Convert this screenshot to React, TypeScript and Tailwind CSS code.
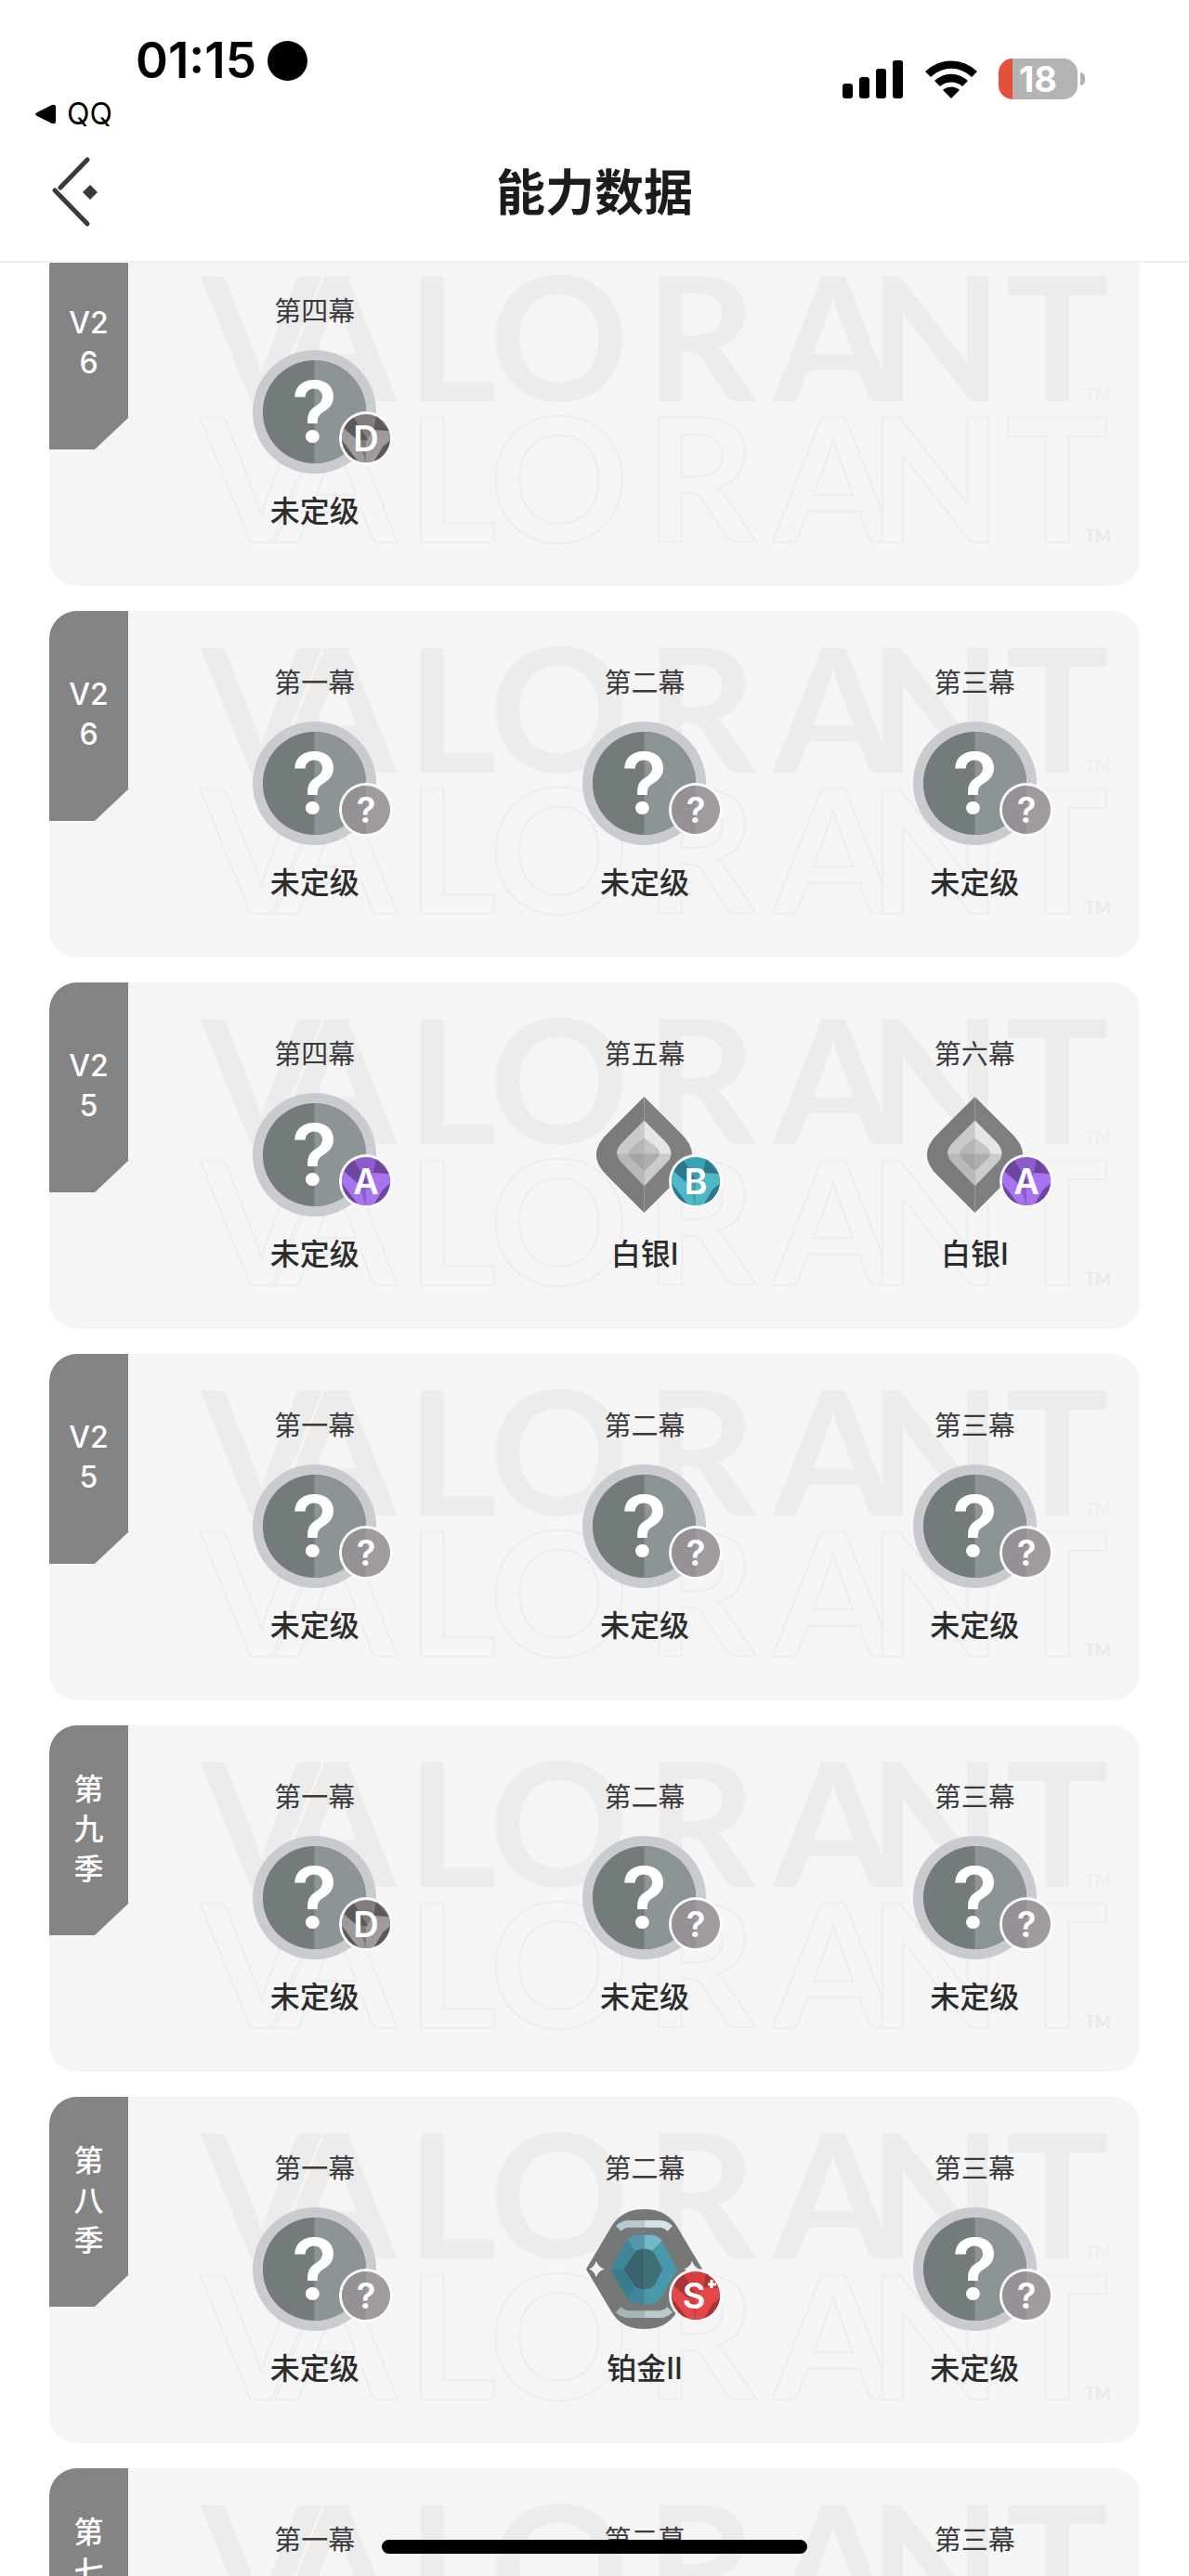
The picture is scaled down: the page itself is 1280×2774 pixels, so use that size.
import { useId } from "react";
import clsx from "clsx";

type Tier = "unranked" | "silver" | "platinum";
type Grade = "A" | "B" | "D" | "S+" | "?";

interface Act {
    name: string;
    rank: string;
    tier: Tier;
    grade: Grade;
}

interface Season {
    id: string;
    label: string;
    acts: Act[];
}

const unranked = (name: string, grade: Grade = "?"): Act => ({
    name,
    rank: "未定级",
    tier: "unranked",
    grade,
});

const SEASONS: Season[] = [
    { id: "v26-2", label: "V26", acts: [unranked("第四幕", "D")] },
    { id: "v26-1", label: "V26", acts: [unranked("第一幕"), unranked("第二幕"), unranked("第三幕")] },
    {
        id: "v25-2",
        label: "V25",
        acts: [
            unranked("第四幕", "A"),
            { name: "第五幕", rank: "白银I", tier: "silver", grade: "B" },
            { name: "第六幕", rank: "白银I", tier: "silver", grade: "A" },
        ],
    },
    { id: "v25-1", label: "V25", acts: [unranked("第一幕"), unranked("第二幕"), unranked("第三幕")] },
    { id: "s9", label: "第九季", acts: [unranked("第一幕", "D"), unranked("第二幕"), unranked("第三幕")] },
    {
        id: "s8",
        label: "第八季",
        acts: [
            unranked("第一幕"),
            { name: "第二幕", rank: "铂金II", tier: "platinum", grade: "S+" },
            unranked("第三幕"),
        ],
    },
    { id: "s7", label: "第七季", acts: [unranked("第一幕"), unranked("第二幕"), unranked("第三幕")] },
];

// base / light / dark facets of each grade badge
const GRADE_COLORS: Record<Grade, [string, string, string]> = {
    A: ["#8f5cd0", "#a873ee", "#6d46a0"],
    B: ["#38a3b4", "#4cb8c8", "#2c7888"],
    D: ["#827c7e", "#a09a9c", "#5d585a"],
    "S+": ["#d83c40", "#e5484b", "#a83436"],
    "?": ["#a09b9e", "#a09b9e", "#a09b9e"],
};

function GradeBadge({ grade }: { grade: Grade }) {
    const clip = useId();
    const [base, light, dark] = GRADE_COLORS[grade];
    return (
        <svg viewBox="0 0 58 58" className="absolute left-[94px] top-[67px] size-[58px]">
            <clipPath id={clip}>
                <circle cx="29" cy="29" r="26" />
            </clipPath>
            <circle cx="29" cy="29" r="29" fill="#fafafa" />
            <g clipPath={`url(#${clip})`}>
                <rect width="58" height="58" fill={base} />
                {grade === "?" ? (
                    <rect width="29" height="58" fill="#969195" />
                ) : (
                    <>
                        <path d="M0 14 L21 32 L29 56 H22 L0 28Z" fill={light} />
                        <path d="M38 19 L58 21 V28 L36 56 H29 V32Z" fill={light} />
                        <path d="M4 17 L15 5 L31 31 L20 31Z" fill={dark} />
                        <path d="M40 4 L54 21 L37 20Z" fill={dark} />
                        <path d="M0 27 L25 60 H0Z" fill={dark} />
                        <path d="M58 29 L47 38 L34 60 H58Z" fill={dark} />
                    </>
                )}
            </g>
            <text
                x={grade === "S+" ? 27 : 29}
                y="43"
                textAnchor="middle"
                fill="#ffffff"
                fontSize="38"
                className="font-['Inter',sans-serif] font-semibold"
            >
                {grade[0]}
            </text>
            {grade === "S+" && <path d="M46 12v9M42 17h9" stroke="#ffffff" strokeWidth="3" />}
        </svg>
    );
}

function UnrankedIcon() {
    return (
        <svg viewBox="0 0 136 136" className="size-full">
            <circle cx="68" cy="68" r="67" fill="#c9cbd0" />
            <circle cx="68" cy="68" r="56" fill="#737b7b" />
            <path d="M68 12a56 56 0 0 1 0 112z" fill="#8d9495" />
            <text
                x="68"
                y="101"
                textAnchor="middle"
                fill="#ffffff"
                fontSize="92"
                className="font-['Inter',sans-serif] font-semibold"
            >
                ?
            </text>
        </svg>
    );
}

function SilverIcon() {
    return (
        <svg viewBox="0 0 136 136" className="size-full">
            <path d="M68 5 L28 45 Q4 68 28 91 L68 131Z" fill="#7b7b7b" />
            <path d="M68 5 L108 45 Q132 68 108 91 L68 131Z" fill="#7f7f7f" />
            <path d="M68 31 L45 54 Q33 67 44 77 L68 102Z" fill="#b9b9b9" />
            <path d="M68 31 L45 54 Q38 61 38 67 H68Z" fill="#cacaca" />
            <path d="M68 31 L91 54 Q103 67 92 77 L68 102Z" fill="#cbcbcb" />
            <path d="M68 31 L91 54 Q97 61 97 67 H68Z" fill="#e6e6e6" />
            <path d="M68 50 L55 60 Q49 67 54 72 L68 86Z" fill="#a5a5a5" />
            <path d="M68 50 L81 60 Q87 67 82 72 L68 86Z" fill="#adadad" />
            <path d="M68 50 L55 60 Q51 64 51 67 H68Z" fill="#b6b6b6" />
            <path d="M68 50 L81 60 Q85 64 85 67 H68Z" fill="#c4c4c4" />
        </svg>
    );
}

function PlatinumIcon() {
    return (
        <svg viewBox="0 0 136 136" className="size-full">
            <path d="M5 68 L33 21 Q44 3 68 3 Q92 3 103 21 L131 68 L103 115 Q92 133 68 133 Q44 133 33 115Z" fill="#767877" />
            <g fill="none" strokeWidth="8">
                <path d="M40 24 Q45 19 51 19 H68" stroke="#b9c9d2" />
                <path d="M68 19 H85 Q91 19 96 24" stroke="#d5e2ea" />
                <path d="M40 112 Q45 117 51 117 H68" stroke="#a3b5b5" />
                <path d="M68 117 H85 Q91 117 96 112" stroke="#b9cccb" />
            </g>
            <path d="M60 31 Q54 31 50 36 L31 68 L50 100 Q54 105 60 106 H68 V31Z" fill="#40859a" />
            <path d="M76 31 Q82 31 86 36 L104 68 L86 100 Q82 105 76 106 H68 V31Z" fill="#4899ab" />
            <path d="M31 68 H47 L57 90 L50 100Z" fill="#397c90" />
            <path d="M68 31 H76 Q82 31 87 37 L77 48 L68 46Z" fill="#74b7c8" />
            <path d="M50 36 Q54 31 60 31 H68 V46 L58 48Z" fill="#5596a8" />
            <path d="M68 46 Q60 46 57 51 L46 68 L57 86 Q61 90 68 90Z" fill="#3a626c" />
            <path d="M68 46 Q76 46 79 51 L88 68 L79 86 Q75 90 68 90Z" fill="#416f76" />
            <path d="M16 59 Q18 66 25 68 Q18 70 16 77 Q14 70 8 68 Q14 66 16 59Z" fill="#f2f2f2" />
            <path d="M120 59 Q122 66 128 68 Q122 70 120 77 Q118 70 111 68 Q118 66 120 59Z" fill="#f2f2f2" />
        </svg>
    );
}

const TIER_ICONS = {
    unranked: UnrankedIcon,
    silver: SilverIcon,
    platinum: PlatinumIcon,
};

// each letter of the wordmark with its centre on the card
const WORDMARK: [string, number][] = [
    ["V", 228],
    ["A", 309],
    ["L", 433],
    ["O", 549],
    ["R", 701],
    ["A", 844],
    ["N", 954],
    ["T", 1085],
];

/** Faint wordmark printed twice behind every season card. */
function Watermark() {
    return (
        <svg
            viewBox="0 0 1174 373"
            aria-hidden="true"
            className="absolute inset-0 size-full font-['Lato',sans-serif] font-bold"
        >
            <g fill="#ececec" fontSize="186" textAnchor="middle">
                {WORDMARK.map(([letter, x]) => (
                    <text key={x} x={x} y="174">
                        {letter}
                    </text>
                ))}
            </g>
            <g fill="#f5f5f5" stroke="#ededed" strokeWidth="2" fontSize="186" textAnchor="middle">
                {WORDMARK.map(([letter, x]) => (
                    <text key={x} x={x} y="326">
                        {letter}
                    </text>
                ))}
            </g>
            <g fill="#e9e9e9" fontSize="18">
                <text x="1115" y="174" fill="#efefef">
                    TM
                </text>
                <text x="1115" y="326">
                    TM
                </text>
            </g>
        </svg>
    );
}

function ActCell({ act }: { act: Act }) {
    const Icon = TIER_ICONS[act.tier];
    return (
        <li className="flex flex-col items-center gap-5">
            <span className="text-[29px] leading-10 text-[#3a3a3c]">{act.name}</span>
            <div className="relative size-[135px]">
                <Icon />
                <GradeBadge grade={act.grade} />
            </div>
            <span className="text-[32px] leading-10 font-medium text-[#2c2c2e]">{act.rank}</span>
        </li>
    );
}

function SeasonCard({ season }: { season: Season }) {
    return (
        <section className="relative flex shrink-0 items-start overflow-hidden rounded-[30px] bg-[#f5f5f5]">
            <Watermark />
            <h2 className="relative flex h-[226px] w-[85px] shrink-0 items-center justify-center bg-[#848484] pb-1 text-[32px] leading-[43px] font-medium text-white [clip-path:polygon(0_0,100%_0,100%_192px,49px_100%,0_100%)]">
                <span className="w-12 text-center break-all">{season.label}</span>
            </h2>
            <ul className="relative ml-[23px] grid flex-1 grid-cols-3 pt-[58px] pb-[60px]">
                {season.acts.map((act) => (
                    <ActCell key={act.name} act={act} />
                ))}
            </ul>
        </section>
    );
}

function StatusBar() {
    return (
        <div className="flex h-[142px] justify-between pr-[112px] pl-9 text-black">
            <div className="flex flex-col pt-9">
                <div className="flex items-center gap-3 pl-[110px]">
                    <time className="text-[53px] leading-[58px] font-semibold">01:15</time>
                    <span className="size-[43px] rounded-full bg-black" />
                </div>
                <a href="#qq" className="flex items-center gap-3 text-[32px] leading-[58px]">
                    <svg viewBox="0 0 24 22" className="h-[22px] w-6">
                        <path d="M4 9 L20 1 Q24 0 24 3 V19 Q24 22 20 21 L4 13 Q0 11 4 9Z" fill="#000000" />
                    </svg>
                    QQ
                </a>
            </div>
            <div className="flex items-center self-start pt-[63px]">
                <svg viewBox="0 0 66 42" className="mr-[22px] h-[42px] w-[66px]">
                    <rect x="0" y="26" width="11" height="16" rx="3" />
                    <rect x="18" y="19" width="11" height="23" rx="3" />
                    <rect x="36" y="10" width="11" height="32" rx="3" />
                    <rect x="54" y="1" width="11" height="41" rx="3" />
                </svg>
                <svg viewBox="0 0 58 42" className="mr-[22px] h-[42px] w-[58px]">
                    <path d="M1 13 A40 40 0 0 1 57 13 L51 19 A31 31 0 0 0 7 19Z" />
                    <path d="M11 23 A26 26 0 0 1 47 23 L41 29 A18 18 0 0 0 17 29Z" />
                    <path d="M20 33 A13 13 0 0 1 38 33 L29 42Z" />
                </svg>
                <div className="flex h-[44px] w-[85px] items-center justify-center overflow-hidden rounded-[15px] bg-[linear-gradient(to_right,#e5503c_15px,#b3b3b3_15px)] text-[38px] leading-none font-bold text-white">
                    18
                </div>
                <span className="ml-[3px] h-[14px] w-[5px] rounded-r-full bg-[#b3b3b3]" />
            </div>
        </div>
    );
}

function TitleBar() {
    return (
        <header className="grid h-[141px] shrink-0 grid-cols-[1fr_auto_1fr] items-center border-b-2 border-[#f0f0f0] pb-2">
            <button type="button" aria-label="返回" className="ml-[54px] w-[54px]">
                <svg viewBox="0 0 54 78" className="h-[78px] w-[54px]">
                    <g stroke="#3a3a3a" strokeWidth="5" strokeLinecap="round">
                        <path d="M40 3 L11 33" />
                        <path d="M5 36 L40 72" />
                    </g>
                    <path d="M43 30 L51 38 L43 46 L35 38Z" fill="#3a3a3a" />
                </svg>
            </button>
            <h1 className="text-[53px] leading-[60px] font-bold text-[#1c1c1e]">能力数据</h1>
        </header>
    );
}

export default function App() {
    return (
        <div
            lang="zh-CN"
            className={clsx(
                "relative flex h-screen flex-col overflow-hidden bg-white",
                "font-['Inter','Noto_Sans_CJK_SC',sans-serif]"
            )}
        >
            <StatusBar />
            <TitleBar />
            {/* the list is scrolled a little, so the first card starts under the title bar */}
            <main className="min-h-0 flex-1 overflow-hidden px-[53px]">
                <div className="-mt-[25px] flex flex-col gap-[27px]">
                    {SEASONS.map((season) => (
                        <SeasonCard key={season.id} season={season} />
                    ))}
                </div>
            </main>
            <div className="absolute bottom-6 left-1/2 h-[15px] w-[458px] -translate-x-1/2 rounded-full bg-black" />
        </div>
    );
}
